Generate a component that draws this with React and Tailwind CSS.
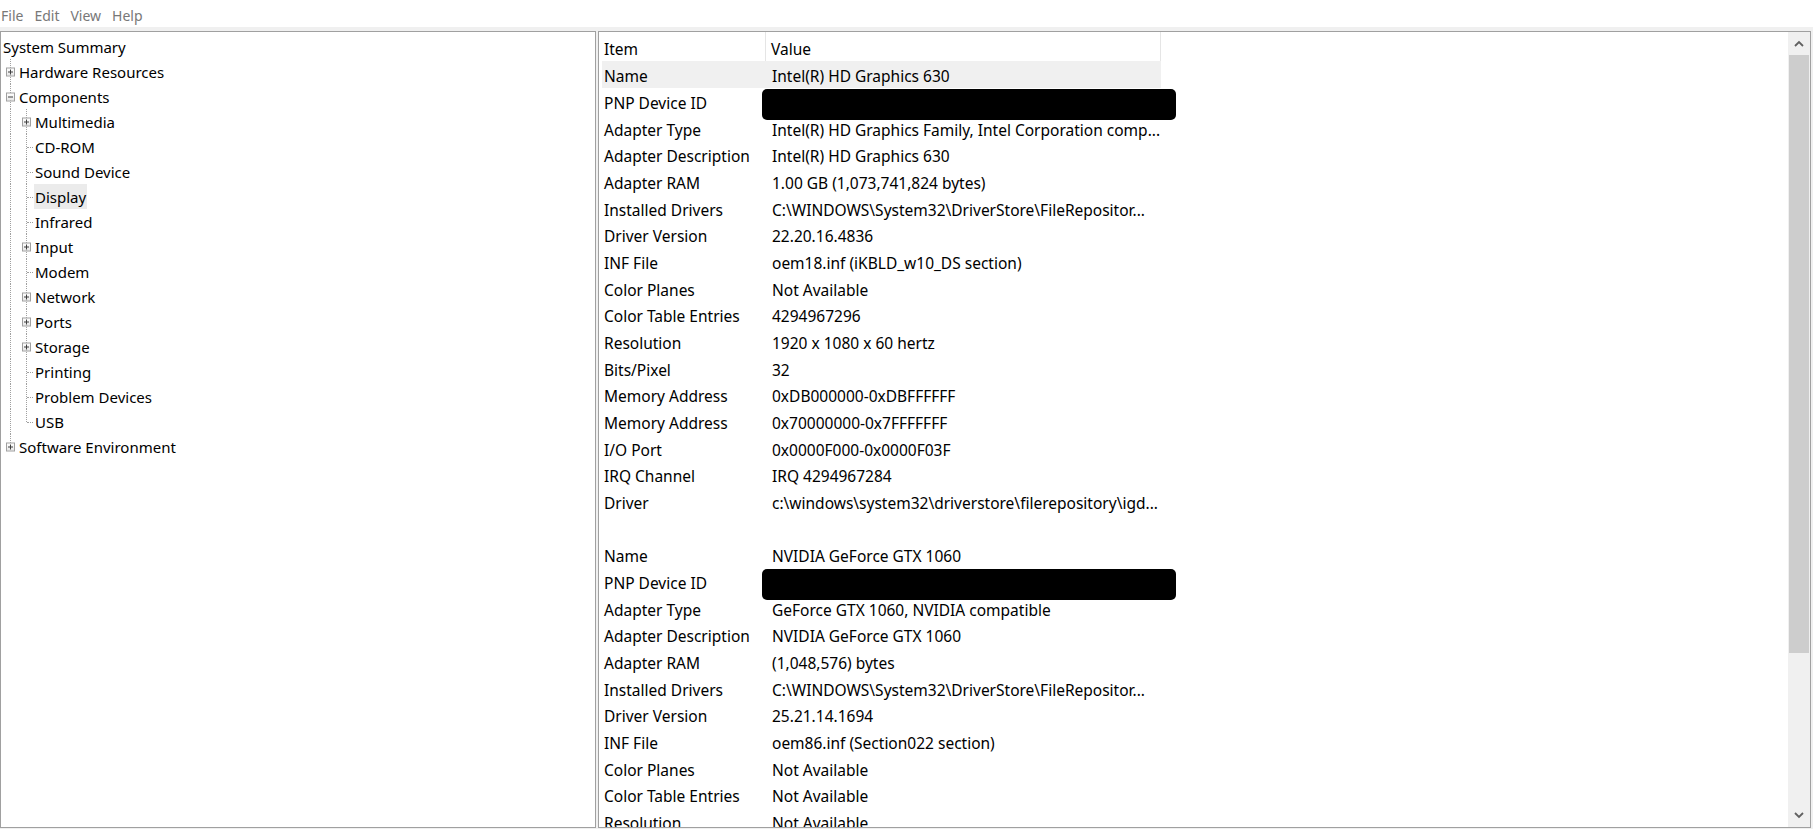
import React from "react";

const tree = [
  { label: "System Summary", level: 0 },
  { label: "Hardware Resources", level: 1, box: "plus" },
  { label: "Components", level: 1, box: "minus" },
  { label: "Multimedia", level: 2, box: "plus" },
  { label: "CD-ROM", level: 2 },
  { label: "Sound Device", level: 2 },
  { label: "Display", level: 2, selected: true },
  { label: "Infrared", level: 2 },
  { label: "Input", level: 2, box: "plus" },
  { label: "Modem", level: 2 },
  { label: "Network", level: 2, box: "plus" },
  { label: "Ports", level: 2, box: "plus" },
  { label: "Storage", level: 2, box: "plus" },
  { label: "Printing", level: 2 },
  { label: "Problem Devices", level: 2 },
  { label: "USB", level: 2, last: true },
  { label: "Software Environment", level: 1, box: "plus", last: true },
];

const rows = [
  ["Name", "Intel(R) HD Graphics 630"],
  ["PNP Device ID", null],
  ["Adapter Type", "Intel(R) HD Graphics Family, Intel Corporation comp..."],
  ["Adapter Description", "Intel(R) HD Graphics 630"],
  ["Adapter RAM", "1.00 GB (1,073,741,824 bytes)"],
  ["Installed Drivers", "C:\\WINDOWS\\System32\\DriverStore\\FileRepositor..."],
  ["Driver Version", "22.20.16.4836"],
  ["INF File", "oem18.inf (iKBLD_w10_DS section)"],
  ["Color Planes", "Not Available"],
  ["Color Table Entries", "4294967296"],
  ["Resolution", "1920 x 1080 x 60 hertz"],
  ["Bits/Pixel", "32"],
  ["Memory Address", "0xDB000000-0xDBFFFFFF"],
  ["Memory Address", "0x70000000-0x7FFFFFFF"],
  ["I/O Port", "0x0000F000-0x0000F03F"],
  ["IRQ Channel", "IRQ 4294967284"],
  ["Driver", "c:\\windows\\system32\\driverstore\\filerepository\\igd..."],
  ["", ""],
  ["Name", "NVIDIA GeForce GTX 1060"],
  ["PNP Device ID", null],
  ["Adapter Type", "GeForce GTX 1060, NVIDIA compatible"],
  ["Adapter Description", "NVIDIA GeForce GTX 1060"],
  ["Adapter RAM", "(1,048,576) bytes"],
  ["Installed Drivers", "C:\\WINDOWS\\System32\\DriverStore\\FileRepositor..."],
  ["Driver Version", "25.21.14.1694"],
  ["INF File", "oem86.inf (Section022 section)"],
  ["Color Planes", "Not Available"],
  ["Color Table Entries", "Not Available"],
  ["Resolution", "Not Available"],
];

function ExpandBox({ type }) {
  return (
    <span className="absolute left-[5px] top-1/2 -translate-y-1/2 w-[9px] h-[9px] border border-[#a0a0a0] bg-gradient-to-b from-white to-[#e6e6e6] flex items-center justify-center">
      <svg width="7" height="7" viewBox="0 0 7 7">
        <path d="M1 3.5h5" stroke="#404040" strokeWidth="1" />
        {type === "plus" && <path d="M3.5 1v5" stroke="#404040" strokeWidth="1" />}
      </svg>
    </span>
  );
}

// one indent column of the tree: vertical dotted line, optional box / dash
function Guide({ width, line, box, dash }) {
  return (
    <div className="relative h-full shrink-0" style={{ width }}>
      {line === "full" && (
        <span className="absolute left-[9px] top-0 bottom-0 border-l border-dotted border-[#a0a0a0]" />
      )}
      {line === "half" && (
        <span className="absolute left-[9px] top-0 h-1/2 border-l border-dotted border-[#a0a0a0]" />
      )}
      {dash && (
        <span className="absolute left-[10px] right-[1px] top-1/2 border-t border-dotted border-[#a0a0a0]" />
      )}
      {box && <ExpandBox type={box} />}
    </div>
  );
}

function TreeRow({ item }) {
  if (item.level === 0) {
    return (
      <div className="h-[25px] flex items-center pl-[2px] pt-[1px]">
        <span>{item.label}</span>
      </div>
    );
  }
  if (item.level === 1) {
    return (
      <div className="h-[25px] flex items-center">
        <Guide width={18} line={item.last ? "half" : "full"} box={item.box} />
        <span className="pt-[1px]">{item.label}</span>
      </div>
    );
  }
  return (
    <div className="h-[25px] flex items-center">
      <Guide width={16} line="full" />
      <Guide width={17} line={item.last ? "half" : "full"} box={item.box} dash={!item.box} />
      <span
        className={`px-[1px] pt-[1px] h-full flex items-center ${item.selected ? "bg-[#ebebeb]" : ""}`}
      >
        {item.label}
      </span>
    </div>
  );
}

export default function App() {
  return (
    <div
      className="w-[1813px] h-[829px] bg-[#f0f0f0] flex flex-col overflow-hidden text-black"
      style={{ fontFamily: '"Noto Sans", "Open Sans", sans-serif' }}
    >
      <div className="h-[27px] bg-white flex items-center gap-[11px] pl-[1px] pt-[4px] text-[14px] text-[#787878]">
        <span>File</span>
        <span>Edit</span>
        <span>View</span>
        <span>Help</span>
      </div>
      <div className="h-[4px]" />
      <div className="flex-1 flex gap-[2px] pr-[2px] pb-[1px] min-h-0">
        {/* left tree */}
        <div className="w-[596px] h-full bg-white border border-[#a0a0a0] pt-[2px] overflow-hidden text-[15px]">
          {tree.map((t) => (
            <TreeRow key={t.label} item={t} />
          ))}
        </div>

        {/* right list */}
        <div className="flex-1 h-full bg-white border border-[#a0a0a0] flex min-w-0 text-[15.5px]">
          <div className="flex-1 overflow-hidden pl-[3px]">
            <div className="w-[559px]">
              <div className="h-[29px] flex items-center">
                <div className="w-[164px] h-full flex items-center pl-[2px] pt-[6px] border-r border-[#e5e5e5]">
                  Item
                </div>
                <div className="flex-1 h-full flex items-center pl-[5px] pt-[6px] border-r border-[#e5e5e5]">
                  Value
                </div>
              </div>
              {rows.map(([k, v], i) => (
                <div
                  key={i}
                  className={`h-[26.68px] flex items-center whitespace-nowrap ${i === 0 ? "bg-[#f0f0f0]" : ""}`}
                >
                  <div className="w-[164px] pl-[2px] pt-[5px]">{k}</div>
                  <div className="relative flex-1 h-full flex items-center pl-[6px] pt-[5px]">
                    {v}
                    {v === null && (
                      <span className="absolute left-[-4px] top-[1px] w-[414px] h-[31px] bg-black rounded-[5px]" />
                    )}
                  </div>
                </div>
              ))}
            </div>
          </div>

          {/* scrollbar */}
          <div className="w-[22px] h-full bg-[#f0f0f0] flex flex-col">
            <div className="h-[23px] flex items-center justify-center">
              <svg width="10" height="7" viewBox="0 0 10 7">
                <path d="M1 6l4-4 4 4" stroke="#606060" strokeWidth="1.8" fill="none" />
              </svg>
            </div>
            <div className="h-[598px] mx-[1px] bg-[#cdcdcd]" />
            <div className="flex-1" />
            <div className="h-[23px] flex items-center justify-center">
              <svg width="10" height="7" viewBox="0 0 10 7">
                <path d="M1 1l4 4 4-4" stroke="#606060" strokeWidth="1.8" fill="none" />
              </svg>
            </div>
          </div>
        </div>
      </div>
    </div>
  );
}
